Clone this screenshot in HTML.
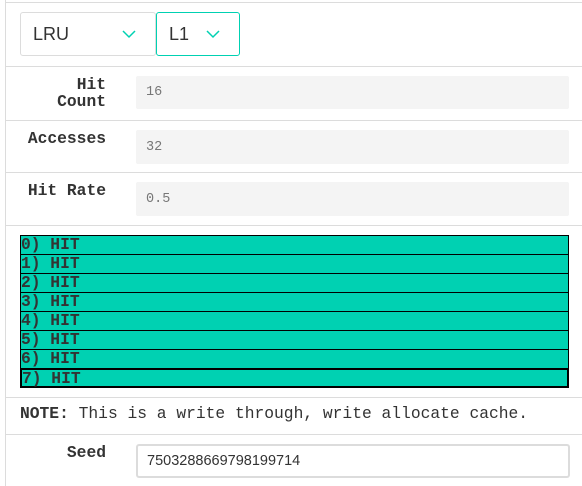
<!DOCTYPE html>
<html><head><style>
body{margin:0;width:582px;height:486px;background:#fff;position:relative;overflow:hidden;font-family:"Liberation Sans",sans-serif}
.a{position:absolute}
.hl{position:absolute;left:5px;right:0;height:1px;background:#dcdcdc}
.vl{position:absolute;left:5px;top:0;width:1px;height:486px;background:#dcdcdc}
.sel{position:absolute;top:12px;height:44px;box-sizing:border-box;border:1px solid #dcdcdc;border-radius:3px;font-size:18px;color:#333;line-height:42px;padding-left:12px}
.lab{position:absolute;right:476px;text-align:right;font:bold 16.3px/17px "Liberation Mono",monospace;color:#333}
.inp{position:absolute;left:136px;width:433px;height:33px;background:#f4f4f4;border-radius:2px;font:13.5px/33px "Liberation Mono",monospace;color:#777;padding-left:10px;box-sizing:border-box}
.row{position:absolute;left:20px;width:549px;height:20px;box-sizing:border-box;border:1px solid #000;background:#00d1b2;font:bold 16.3px/18px "Liberation Mono",monospace;color:#333;padding-left:0}
</style></head><body>
<div class="vl"></div>
<div class="hl" style="top:2px"></div>
<div class="hl" style="top:66px"></div>
<div class="hl" style="top:120px"></div>
<div class="hl" style="top:172px"></div>
<div class="hl" style="top:225px"></div>
<div class="hl" style="top:397px"></div>
<div class="hl" style="top:434px"></div>
<div class="sel" style="left:20px;width:136px">LRU<svg class="a" style="left:100px;top:16px" width="16" height="10"><path d="M2 2 L8 8 L14 2" stroke="#00d1b2" stroke-width="1.5" fill="none"/></svg></div>
<div class="sel" style="left:156px;width:84px;border-color:#00d1b2">L1<svg class="a" style="left:48px;top:16px" width="16" height="10"><path d="M2 2 L8 8 L14 2" stroke="#00d1b2" stroke-width="1.5" fill="none"/></svg></div>
<div class="lab" style="top:76px">Hit<br>Count</div>
<div class="inp" style="top:76px">16</div>
<div class="lab" style="top:130px">Accesses</div>
<div class="inp" style="top:130px;height:34px;line-height:36px">32</div>
<div class="lab" style="top:182px">Hit Rate</div>
<div class="inp" style="top:182px;height:34px;line-height:36px">0.5</div>
<div class="row" style="top:235px">0) HIT</div>
<div class="row" style="top:254px">1) HIT</div>
<div class="row" style="top:273px">2) HIT</div>
<div class="row" style="top:292px">3) HIT</div>
<div class="row" style="top:311px">4) HIT</div>
<div class="row" style="top:330px">5) HIT</div>
<div class="row" style="top:349px">6) HIT</div>
<div class="row" style="top:368px;height:20px;border-width:2px;line-height:17px">7) HIT</div>
<div class="a" style="left:20px;top:405px;font:16.3px/18px 'Liberation Mono',monospace;color:#333;white-space:nowrap"><b>NOTE:</b> This is a write through, write allocate cache.</div>
<div class="lab" style="top:444px">Seed</div>
<div class="a" style="left:136px;top:444px;width:434px;height:34px;box-sizing:border-box;border:2px solid #dcdcdc;border-radius:3px;font-size:14.5px;line-height:30px;padding-left:9px;color:#333">7503288669798199714</div>
</body></html>
